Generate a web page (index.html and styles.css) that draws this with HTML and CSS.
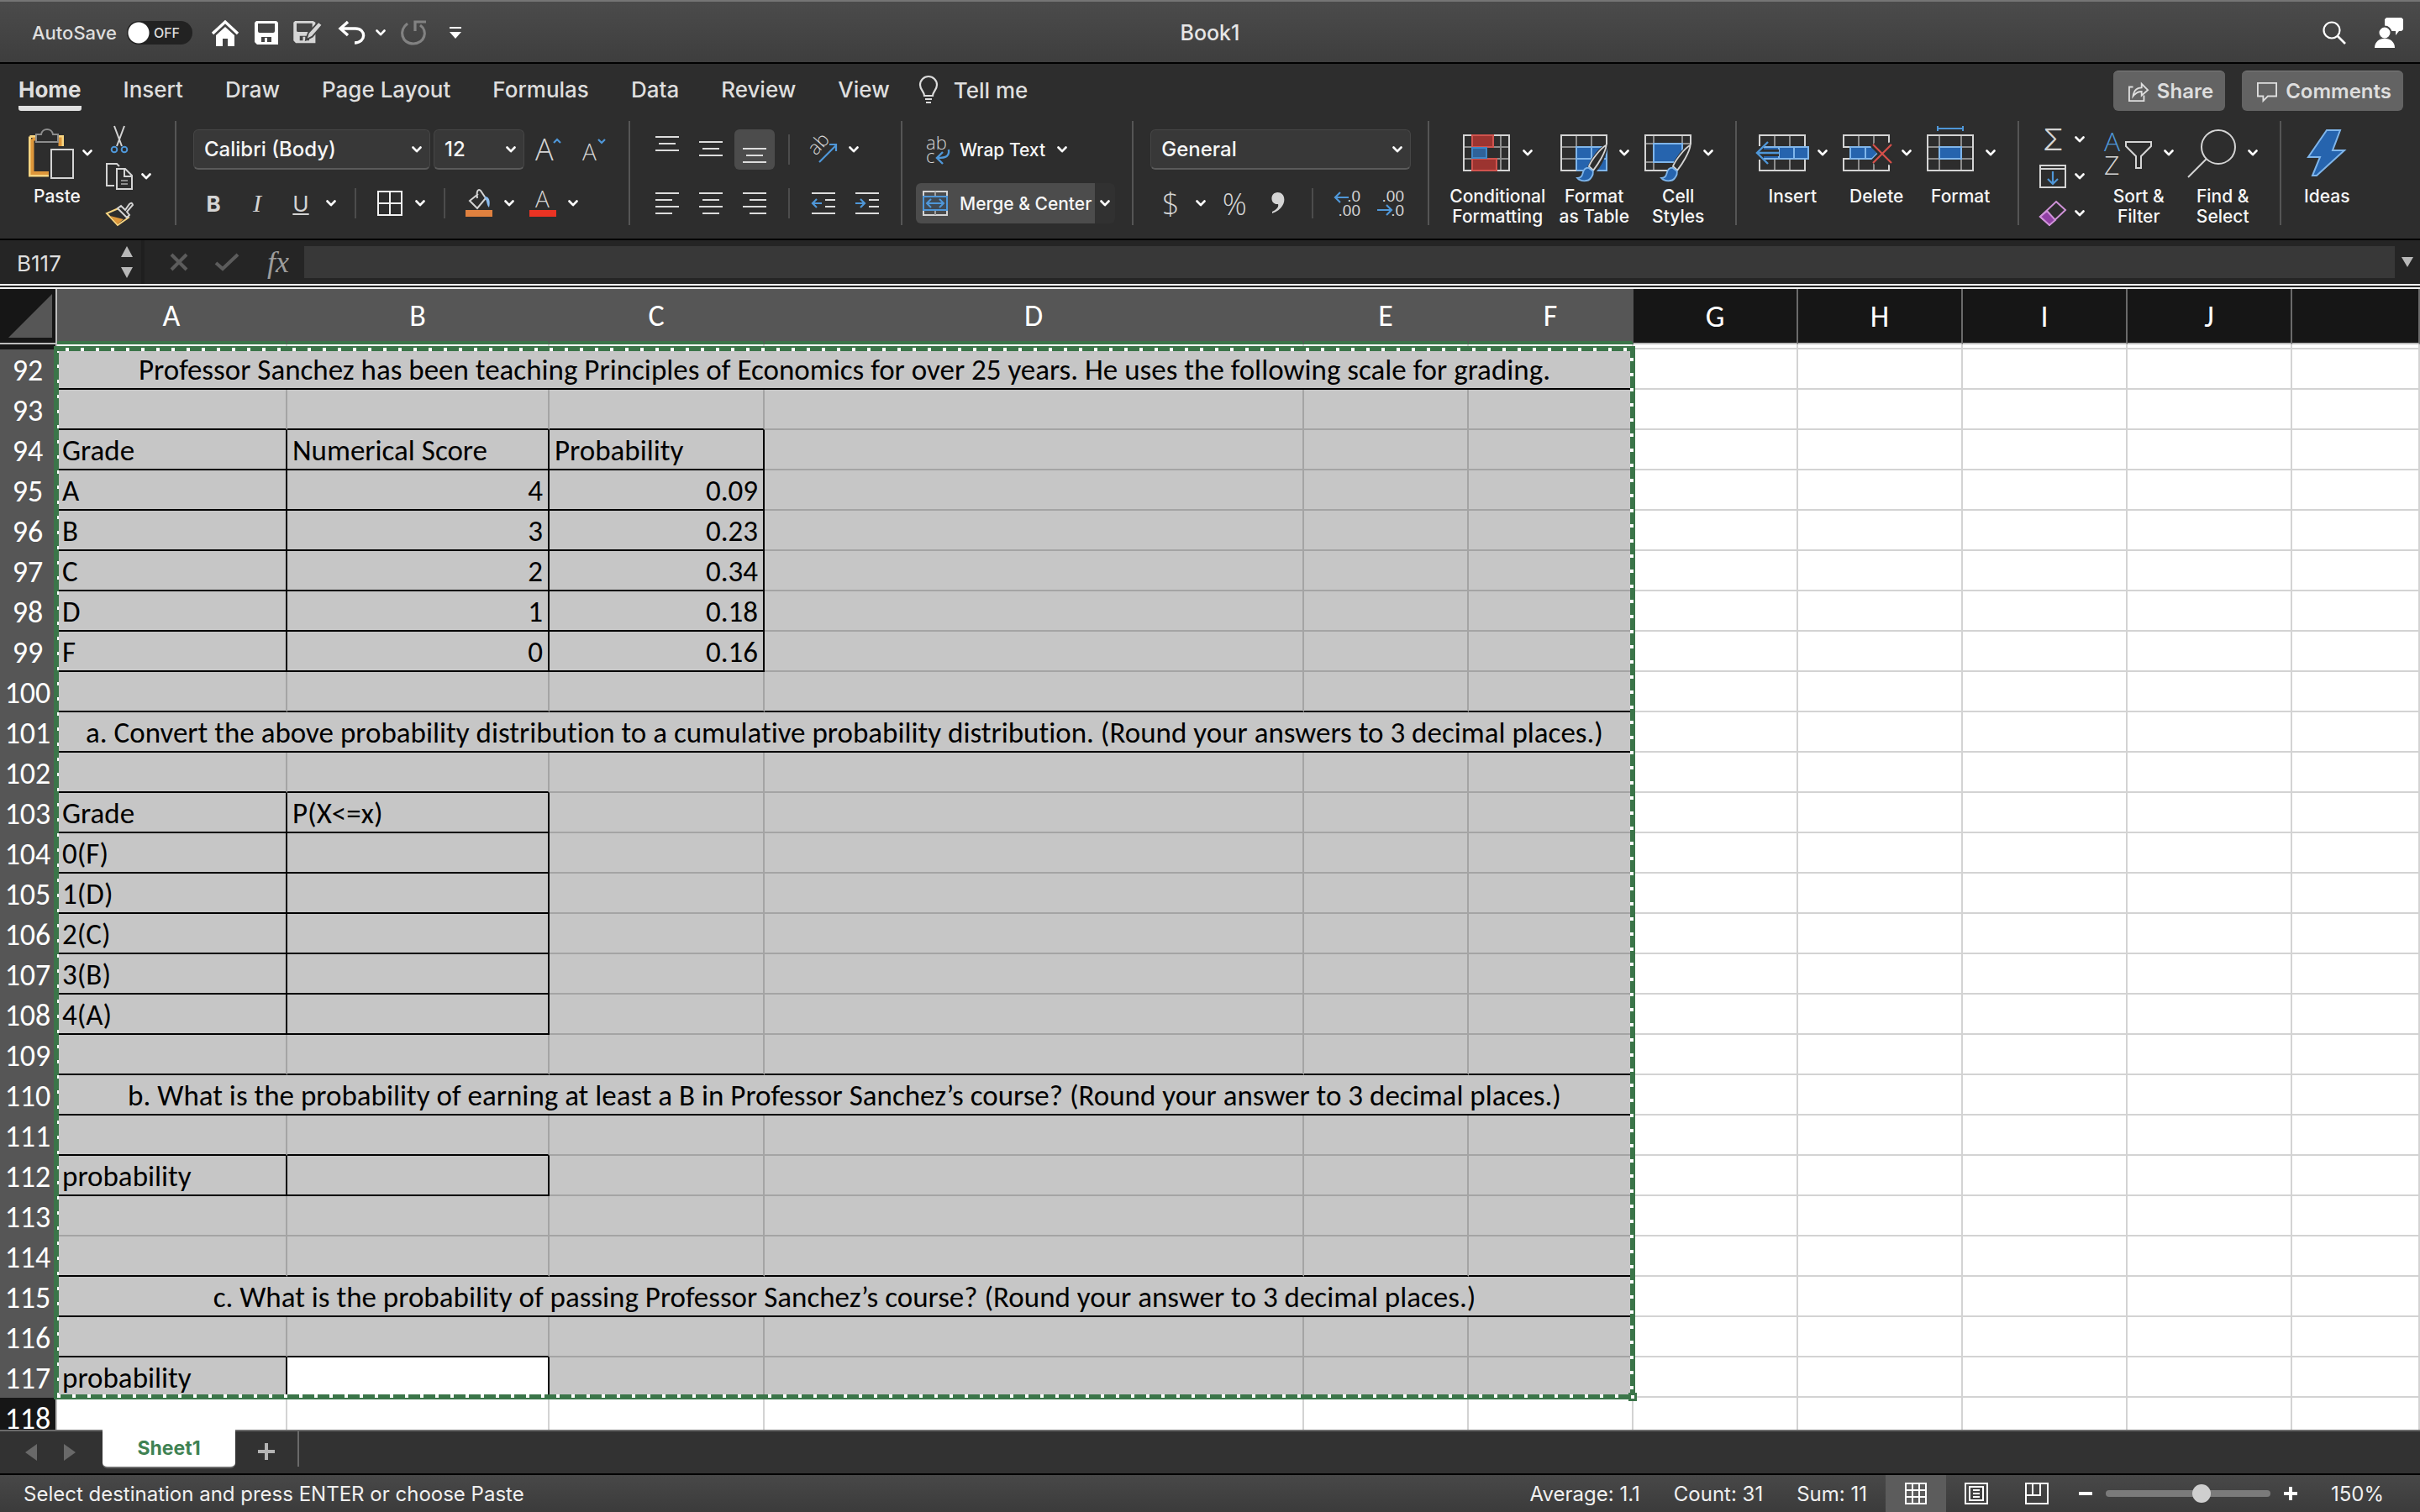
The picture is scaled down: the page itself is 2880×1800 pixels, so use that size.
FILE: index.html
```html
<!DOCTYPE html>
<html lang="en">

<head>
    <meta charset="UTF-8">
    <meta name="viewport" content="width=device-width, initial-scale=1.0">
    <title>Book1</title>
    <link rel="stylesheet" href="styles.css">
</head>

<body>
    <!-- Shared icons -->
    <svg class="defs" aria-hidden="true">
        <symbol id="chev" viewBox="0 0 12 8">
            <path d="M1.5 1.5 6 6.2l4.5-4.7" fill="none" stroke="#fff" stroke-width="2.6" stroke-linecap="round" stroke-linejoin="round" />
        </symbol>
        <symbol id="brush" viewBox="0 0 48 60">
            <path d="M46 3c-7 3-20 19-25 32l7 6C37 33 45 14 46 3z" fill="#2d2d2d" stroke="#2d2d2d" stroke-width="6" />
            <path d="M47 1C38 6 24 24 20 34l7 6C34 31 46 12 47 1z" fill="#2d2d2d" stroke="#d4d4d4" stroke-width="2.4" />
            <path d="M19 36c-6 0-8 5-9 10-1 4-4 6-8 6 5 6 17 6 21 0 3-4 4-8 3-11z" fill="#2664ae" stroke="#7fb5ea" stroke-width="2.4" />
        </symbol>
    </svg>

    <header class="titlebar">
        <div class="quick">
            <label class="autosave" for="autosave">AutoSave</label>
            <span class="switch"><input type="checkbox" id="autosave"><span>OFF</span></span>
            <button type="button" aria-label="Home">
                <svg width="34" height="32" viewBox="0 0 34 32"><path d="M2 17 17 3l15 14" fill="none" stroke="#fff" stroke-width="3.4" /><path d="M6 19 17 9l11 10v13h-8v-9h-6v9H6z" fill="#fff" /></svg>
            </button>
            <button type="button" aria-label="Save">
                <svg width="28" height="28" viewBox="0 0 28 28"><path fill="#fff" fill-rule="evenodd" d="M2 0h24l2 2v26H3l-3-3V2zM4 3v9q0 2 2 2h16q2 0 2-2V3zM8 19v6h4v-5h3v5h5v-6z" /></svg>
            </button>
            <button type="button" aria-label="Save as">
                <svg width="36" height="28" viewBox="0 0 38 30"><path fill="#d6d6d6" fill-rule="evenodd" d="M2 0h23l3 2v26H3l-3-3V2zM4 3v9q0 2 2 2h16q2 0 2-2V3zM8 19v6h4v-5h3v5h5v-6z" /><path d="m16 24 3-9L32 1l5 4-13 15z" fill="#d6d6d6" stroke="#444" stroke-width="2" /></svg>
            </button>
            <button type="button" class="q-undo" aria-label="Undo">
                <svg width="32" height="28" viewBox="0 0 32 28"><path d="M11 1 2 9l9 8M3 9h17c13 0 13 17-1 17" fill="none" stroke="#fff" stroke-width="3.4" /></svg>
                <svg class="chev"><use href="#chev" /></svg>
            </button>
            <button type="button" aria-label="Repeat">
                <svg width="30" height="30" viewBox="0 0 30 30"><path d="M8 4C-3 12 1 28 15 28c13 0 18-15 8-22M17 13V2h13" fill="none" stroke="#828282" stroke-width="3.2" /></svg>
            </button>
            <button type="button" class="q-more" aria-label="Customize toolbar">
                <svg width="14" height="14" viewBox="0 0 14 14"><path d="M0 0h14v2H0zM0 6h14l-7 8z" fill="#fff" /></svg>
            </button>
        </div>
        <h1>Book1</h1>
        <div class="account">
            <button type="button" aria-label="Search">
                <svg width="28" height="28" viewBox="0 0 28 28"><circle cx="11" cy="11" r="9.5" fill="none" stroke="#fff" stroke-width="2.2" /><path d="m18 18 9 9" stroke="#fff" stroke-width="2.6" /></svg>
            </button>
            <button type="button" aria-label="Account">
                <svg width="34" height="36" viewBox="0 0 34 36"><path d="M14 0h18l2 2v12l-2 2h-3l-4 5v-5H14l-2-2V2z" fill="#fff" /><circle cx="12" cy="18" r="7.5" fill="#fff" stroke="#454545" stroke-width="2" /><path d="M0 36c0-15 24-15 24 0z" fill="#fff" /></svg>
            </button>
        </div>
    </header>

    <div class="tabs">
        <nav>
            <a href="#" class="current">Home</a>
            <a href="#">Insert</a>
            <a href="#">Draw</a>
            <a href="#">Page Layout</a>
            <a href="#">Formulas</a>
            <a href="#">Data</a>
            <a href="#">Review</a>
            <a href="#">View</a>
        </nav>
        <button type="button" class="tellme">
            <svg width="24" height="36" viewBox="0 0 24 36"><path d="M7 25c0-5-5-7-5-13a10 10 0 0 1 20 0c0 6-5 8-5 13zM8 29h8M9 33h6" fill="none" stroke="#dcdcdc" stroke-width="2.2" /></svg>
            Tell me
        </button>
        <div class="sharing">
            <button type="button">
                <svg width="24" height="26" viewBox="0 0 26 26"><path d="M6 7H1v18h19v-7" fill="none" stroke="#dedede" stroke-width="2" /><path d="M6 19c1-8 5-11 11-11V3l8 8-8 7v-5c-5 0-8 2-11 6z" fill="none" stroke="#dedede" stroke-width="2" /></svg>
                Share
            </button>
            <button type="button">
                <svg width="24" height="26" viewBox="0 0 26 26"><path d="M1 2h24v17H14l-6 6v-6H1z" fill="none" stroke="#dedede" stroke-width="2" /></svg>
                Comments
            </button>
        </div>
    </div>

    <div class="ribbon">
        <section class="group clipboard">
            <button type="button" class="big">
                <span class="pic">
                    <svg width="60" height="64" viewBox="0 0 60 64">
                        <path d="M9.5 12.5H48.500V26M32 59H9.500V12.5" fill="none" stroke="#f7d581" stroke-width="3" />
                        <path d="M12.500 15.500H45.500V26M32 56H12.500V15.500" fill="none" stroke="#dd963a" stroke-width="4" />
                        <path d="M17 10h6c1-8 13-8 14 0h6v9H17z" fill="#2d2d2d" stroke="#8d8d8d" stroke-width="2" />
                        <path d="M32 24h30v40H32z" fill="#2d2d2d" />
                        <path d="M35 28h26v34H35z" fill="#2d2d2d" stroke="#d4d4d4" stroke-width="2" />
                    </svg>
                    <svg class="chev"><use href="#chev" /></svg>
                </span>
                Paste
            </button>
            <div class="stack">
                <div>
                    <button type="button" class="tool" aria-label="Cut">
                        <svg width="32" height="32" viewBox="0 0 32 32"><path d="m10 0 9 24M22 0l-9 24" stroke="#d4d4d4" stroke-width="2" /><circle cx="10" cy="28" r="3.3" fill="none" stroke="#4f97d8" stroke-width="2" /><circle cx="22" cy="28" r="3.3" fill="none" stroke="#4f97d8" stroke-width="2" /></svg>
                    </button>
                </div>
                <div>
                    <button type="button" class="tool" aria-label="Copy">
                        <svg width="32" height="32" viewBox="0 0 32 32"><path d="M16 4 13 1H1v26h9" fill="none" stroke="#d4d4d4" stroke-width="2" /><path d="M13 7h10l8 8v16H13zM22 7v9h9" fill="none" stroke="#d4d4d4" stroke-width="2" /><path d="M18 21h8M18 25h8" stroke="#8d8d8d" stroke-width="2" /></svg>
                    </button>
                    <button type="button" class="more" aria-label="Copy options"><svg class="chev"><use href="#chev" /></svg></button>
                </div>
                <div>
                    <button type="button" class="tool" aria-label="Format painter">
                        <svg width="32" height="32" viewBox="0 0 32 32"><path d="M15 10 1 16l13 14 13-9z" fill="#2d2d2d" stroke="#f7d581" stroke-width="2" /><path d="m5 19 16 4-7 6z" fill="#dd963a" /><path d="m14 10 4-3 5 5 5-7q3-3 4 1l-7 8 3 4-3 3z" fill="#2d2d2d" stroke="#d4d4d4" stroke-width="2" /></svg>
                    </button>
                </div>
            </div>
        </section>

        <section class="group font">
            <div class="row">
                <span class="pick family"><select aria-label="Font"><option>Calibri (Body)</option></select><svg class="chev"><use href="#chev" /></svg></span>
                <span class="pick size"><select aria-label="Font size"><option>12</option></select><svg class="chev"><use href="#chev" /></svg></span>
                <button type="button" class="tool" aria-label="Increase font size">
                    <svg width="32" height="32" viewBox="0 0 32 32"><text x="1" y="29" font-size="36" class="thin">A</text><path d="m23 8 4-4 4 4" fill="none" stroke="#4f97d8" stroke-width="2.2" /></svg>
                </button>
                <button type="button" class="tool" aria-label="Decrease font size">
                    <svg width="32" height="32" viewBox="0 0 32 32"><text x="5" y="29" font-size="28" class="thin">A</text><path d="m24 4 4 4 4-4" fill="none" stroke="#4f97d8" stroke-width="2.2" /></svg>
                </button>
            </div>
            <div class="row">
                <button type="button" class="tool letter bold">B</button>
                <button type="button" class="tool letter italic">I</button>
                <span class="split">
                    <button type="button" class="tool letter"><u>U</u></button>
                    <button type="button" class="more" aria-label="Underline options"><svg class="chev"><use href="#chev" /></svg></button>
                </span>
                <i class="sep"></i>
                <span class="split">
                    <button type="button" class="tool" aria-label="Borders">
                        <svg width="32" height="32" viewBox="0 0 32 32"><path d="M2 2h28v28H2zM16 2v28M2 16h28" fill="none" stroke="#f2f2f2" stroke-width="2" /></svg>
                    </button>
                    <button type="button" class="more" aria-label="Border options"><svg class="chev"><use href="#chev" /></svg></button>
                </span>
                <i class="sep"></i>
                <span class="split">
                    <button type="button" class="tool" aria-label="Fill color">
                        <svg width="32" height="32" viewBox="0 0 32 32"><path d="M15 5 5 13l9 9 10-12-6-9c-4-3-5 2-4 9" fill="none" stroke="#d4d4d4" stroke-width="2" /><path d="M22 8c6-1 8 5 6 13-3-3-2-8-6-13z" fill="#8bbdf0" /><path d="M0 24h32v8H0z" fill="#e0813f" /></svg>
                    </button>
                    <button type="button" class="more" aria-label="Fill color options"><svg class="chev"><use href="#chev" /></svg></button>
                </span>
                <span class="split">
                    <button type="button" class="tool" aria-label="Font color">
                        <svg width="32" height="32" viewBox="0 0 32 32"><text x="7" y="21" font-size="28" class="thin">A</text><path d="M0 24h32v8H0z" fill="#ea3323" /></svg>
                    </button>
                    <button type="button" class="more" aria-label="Font color options"><svg class="chev"><use href="#chev" /></svg></button>
                </span>
            </div>
        </section>

        <section class="group align">
            <div class="row">
                <button type="button" class="tool" aria-label="Top align"><svg width="28" height="32" viewBox="0 0 28 32"><path d="M0 1h28M4 9h20M0 17h28" class="bar" /></svg></button>
                <button type="button" class="tool" aria-label="Middle align"><svg width="28" height="32" viewBox="0 0 28 32"><path d="M0 7h28M4 15h20M0 23h28" class="bar" /></svg></button>
                <button type="button" class="tool on" aria-label="Bottom align"><svg width="28" height="32" viewBox="0 0 28 32"><path d="M0 15h28M4 23h20M0 31h28" class="bar" /></svg></button>
                <i class="sep"></i>
                <span class="split">
                    <button type="button" class="tool" aria-label="Orientation">
                        <svg width="32" height="32" viewBox="0 0 32 32"><text x="0" y="0" font-size="23" class="thin" transform="translate(7 24) rotate(-48)">ab</text><path d="m11 31 20-20M23 10h8v8" fill="none" stroke="#4f97d8" stroke-width="2.2" /></svg>
                    </button>
                    <button type="button" class="more" aria-label="Orientation options"><svg class="chev"><use href="#chev" /></svg></button>
                </span>
            </div>
            <div class="row">
                <button type="button" class="tool" aria-label="Align left"><svg width="28" height="26" viewBox="0 0 28 26"><path d="M0 1h28M0 9h20M0 17h28M0 25h20" class="bar" /></svg></button>
                <button type="button" class="tool" aria-label="Center"><svg width="28" height="26" viewBox="0 0 28 26"><path d="M0 1h28M4 9h20M0 17h28M4 25h20" class="bar" /></svg></button>
                <button type="button" class="tool" aria-label="Align right"><svg width="28" height="26" viewBox="0 0 28 26"><path d="M0 1h28M8 9h20M0 17h28M8 25h20" class="bar" /></svg></button>
                <i class="sep"></i>
                <button type="button" class="tool" aria-label="Decrease indent"><svg width="28" height="26" viewBox="0 0 28 26"><path d="M0 1h28M16 9h12M16 17h12M0 25h28" class="bar" /><path d="M12 13H2M6 8l-5 5 5 5" fill="none" stroke="#4f97d8" stroke-width="2.2" /></svg></button>
                <button type="button" class="tool" aria-label="Increase indent"><svg width="28" height="26" viewBox="0 0 28 26"><path d="M0 1h28M16 9h12M16 17h12M0 25h28" class="bar" /><path d="M0 13h10M6 8l5 5-5 5" fill="none" stroke="#4f97d8" stroke-width="2.2" /></svg></button>
            </div>
        </section>

        <section class="group wrap">
            <div class="row">
                <button type="button" class="wide">
                    <svg width="30" height="36" viewBox="0 0 30 36"><text x="4" y="18" font-size="22" class="thin">ab</text><text x="4" y="34" font-size="22" class="thin">c</text><path d="M31 18c1 8-3 10-13 10M24 21l-7 7 7 7" fill="none" stroke="#4f97d8" stroke-width="2.4" /></svg>
                    Wrap Text
                    <svg class="chev"><use href="#chev" /></svg>
                </button>
            </div>
            <div class="row">
                <span class="split merge">
                    <button type="button" class="wide on">
                        <svg width="30" height="30" viewBox="0 0 30 30"><path d="M1 1h28v28H1z" fill="none" stroke="#d4d4d4" stroke-width="2" /><path d="M15 1v6M15 23v6" stroke="#a0a0a0" stroke-width="2" /><path d="M1 7h28v16H1z" fill="#3f4a55" stroke="#4f97d8" stroke-width="2" /><path d="M5 15h20M10 10l-5 5 5 5M20 10l5 5-5 5" fill="none" stroke="#4f97d8" stroke-width="2" /></svg>
                        Merge &amp; Center
                    </button>
                    <button type="button" class="more" aria-label="Merge options"><svg class="chev"><use href="#chev" /></svg></button>
                </span>
            </div>
        </section>

        <section class="group number">
            <div class="row">
                <span class="pick format"><select aria-label="Number format"><option>General</option></select><svg class="chev"><use href="#chev" /></svg></span>
            </div>
            <div class="row">
                <span class="split">
                    <button type="button" class="tool sign">$</button>
                    <button type="button" class="more" aria-label="Currency options"><svg class="chev"><use href="#chev" /></svg></button>
                </span>
                <button type="button" class="tool sign">%</button>
                <button type="button" class="tool" aria-label="Comma style"><svg width="16" height="26" viewBox="0 0 16 26"><path d="M7.500 0C18 0 20 18 1 25v-2c6-3 8-6 7-9C-2 15-2 0 7.500 0z" fill="#d4d4d4" /></svg></button>
                <i class="sep"></i>
                <button type="button" class="tool" aria-label="Increase decimal"><svg width="32" height="32" viewBox="0 0 32 32"><text x="32" y="14" class="thin digits">.0</text><text x="32" y="31" class="thin digits">.00</text><path d="M18 9H2M8 3 2 9l6 6" fill="none" stroke="#4f97d8" stroke-width="2.2" /></svg></button>
                <button type="button" class="tool" aria-label="Decrease decimal"><svg width="32" height="32" viewBox="0 0 32 32"><text x="32" y="14" class="thin digits">.00</text><text x="32" y="31" class="thin digits">.0</text><path d="M0 24h16M11 18l6 6-6 6" fill="none" stroke="#4f97d8" stroke-width="2.2" /></svg></button>
            </div>
        </section>

        <section class="group cells">
            <button type="button" class="big two">
                <span class="pic">
                    <svg width="60" height="64" viewBox="0 0 60 64"><path d="M12 11v42M35 11v42M46 11v42M2 25h54M2 39h54" stroke="#8d8d8d" stroke-width="2" /><path d="M2 11h54v42H2z" fill="none" stroke="#d4d4d4" stroke-width="2" /><path d="M12 11h25v14H12zM12 39h29v14H12z" fill="#9c3430" stroke="#d0534e" stroke-width="2" /><path d="M12 26h17v12H12z" fill="#2f6299" stroke="#3f86c6" stroke-width="2" /><path d="M30 26h15v12H30z" fill="#2d2d2d" /></svg>
                    <svg class="chev"><use href="#chev" /></svg>
                </span>
                Conditional<br>Formatting
            </button>
            <button type="button" class="big">
                <span class="pic">
                    <svg width="60" height="64" viewBox="0 0 60 64"><path d="M21 25h36v28H21z" fill="#2664ae" /><path d="M21 11v14M39 11v14M3 25h18M3 39h18" stroke="#8d8d8d" stroke-width="2" /><path d="M21 53V25h36M39 25v28M21 39h36" fill="none" stroke="#7fb5ea" stroke-width="2" /><path d="M21 53H3V11h54v14" fill="none" stroke="#d4d4d4" stroke-width="2" /><path d="M57 25v28H21" fill="none" stroke="#7fb5ea" stroke-width="2" /><use href="#brush" x="16" y="22" width="46" height="46" /></svg>
                    <svg class="chev"><use href="#chev" /></svg>
                </span>
                Format<br>as Table
            </button>
            <button type="button" class="big">
                <span class="pic">
                    <svg width="60" height="64" viewBox="0 0 60 64"><path d="M13 11v42M47 11v42M3 21h54M3 43h54" stroke="#8d8d8d" stroke-width="2" /><path d="M3 11h54v42H3z" fill="none" stroke="#d4d4d4" stroke-width="2" /><path d="M13 21h34v22H13z" fill="#2664ae" stroke="#7fb5ea" stroke-width="2" /><path d="M40 44h20v12H40zM50 24h10v22H50z" fill="#2d2d2d" /><use href="#brush" x="16" y="22" width="46" height="46" /></svg>
                    <svg class="chev"><use href="#chev" /></svg>
                </span>
                Cell<br>Styles
            </button>
        </section>

        <section class="group cells">
            <button type="button" class="big">
                <span class="pic">
                    <svg width="60" height="64" viewBox="0 0 60 64"><path d="M21 11v42M39 11v42" stroke="#8d8d8d" stroke-width="2" /><path d="M3 11h54v42H3z" fill="none" stroke="#d4d4d4" stroke-width="2" /><path d="M4 25h57v14H4z" fill="#2664ae" stroke="#7fb5ea" stroke-width="2" /><path d="M26 25v14M44 25v14" stroke="#7fb5ea" stroke-width="2" /><path d="M1 24h7v16H1zM6 28h20v8H6z" fill="#2d2d2d" /><path d="M26 32H0M13 19 0 32l13 13" fill="none" stroke="#4f97d8" stroke-width="2.4" /></svg>
                    <svg class="chev"><use href="#chev" /></svg>
                </span>
                Insert
            </button>
            <button type="button" class="big">
                <span class="pic">
                    <svg width="60" height="64" viewBox="0 0 60 64"><path d="M21 11v42M39 11v42" stroke="#8d8d8d" stroke-width="2" /><path d="M3 11h54v42H3z" fill="none" stroke="#d4d4d4" stroke-width="2" /><path d="M0 26h60v12H0z" fill="#2d2d2d" /><path d="M4 25h8M4 39h8" stroke="#d4d4d4" stroke-width="2" /><path d="M11 25h26l7 7-7 7H11z" fill="#2664ae" stroke="#7fb5ea" stroke-width="2" /><path d="M29 25v14" stroke="#7fb5ea" stroke-width="2" /><path d="m38 22 22 22M60 22 38 44" stroke="#2d2d2d" stroke-width="8" /><path d="m38 22 22 22M60 22 38 44" stroke="#d8504a" stroke-width="2.2" /></svg>
                    <svg class="chev"><use href="#chev" /></svg>
                </span>
                Delete
            </button>
            <button type="button" class="big">
                <span class="pic">
                    <svg width="60" height="64" viewBox="0 0 60 64"><path d="M17 11v42M43 11v42M3 25h54M3 39h54" stroke="#8d8d8d" stroke-width="2" /><path d="M3 11h54v42H3z" fill="none" stroke="#d4d4d4" stroke-width="2" /><path d="M17 25h26v14H17z" fill="#2664ae" stroke="#7fb5ea" stroke-width="2" /><path d="M15 3h30M15 0v6M45 0v6" stroke="#4f97d8" stroke-width="2" /></svg>
                    <svg class="chev"><use href="#chev" /></svg>
                </span>
                Format
            </button>
        </section>

        <section class="group editing">
            <div class="stack">
                <div>
                    <button type="button" class="tool sum">Σ</button>
                    <button type="button" class="more" aria-label="AutoSum options"><svg class="chev"><use href="#chev" /></svg></button>
                </div>
                <div>
                    <button type="button" class="tool" aria-label="Fill"><svg width="32" height="28" viewBox="0 0 32 28"><path d="M1 1h30v26H1zM1 5h30" fill="none" stroke="#d4d4d4" stroke-width="2" /><path d="M16 8v15M10 17l6 6 6-6" fill="none" stroke="#4f97d8" stroke-width="2.2" /></svg></button>
                    <button type="button" class="more" aria-label="Fill options"><svg class="chev"><use href="#chev" /></svg></button>
                </div>
                <div>
                    <button type="button" class="tool" aria-label="Clear"><svg width="32" height="32" viewBox="0 0 32 32"><path d="M20 2 31 12 12 30 1 20z" fill="none" stroke="#cf92d8" stroke-width="2" /><path d="m9 13 10 11-7 6L1 20z" fill="#9140a5" stroke="#cf92d8" stroke-width="2" /></svg></button>
                    <button type="button" class="more" aria-label="Clear options"><svg class="chev"><use href="#chev" /></svg></button>
                </div>
            </div>
            <button type="button" class="big">
                <span class="pic">
                    <svg width="60" height="64" viewBox="0 0 60 64"><text x="1" y="30" font-size="32" class="thin blue">A</text><text x="1" y="58" font-size="32" class="thin">Z</text><path d="M27 19h30v5L45 36v14h-6V36L27 24z" fill="none" stroke="#d4d4d4" stroke-width="2" /></svg>
                    <svg class="chev"><use href="#chev" /></svg>
                </span>
                Sort &amp;<br>Filter
            </button>
            <button type="button" class="big">
                <span class="pic">
                    <svg width="60" height="64" viewBox="0 0 60 64"><circle cx="37" cy="25" r="20" fill="none" stroke="#d4d4d4" stroke-width="2" /><path d="M23 39 1 61" stroke="#d4d4d4" stroke-width="2" /></svg>
                    <svg class="chev"><use href="#chev" /></svg>
                </span>
                Find &amp;<br>Select
            </button>
        </section>

        <section class="group ideas">
            <button type="button" class="big">
                <span class="pic">
                    <svg width="60" height="64" viewBox="0 0 60 64"><path d="M30 5h16L37 29h14L18 59h-5l9-22H8z" fill="#2664ae" stroke="#7fb5ea" stroke-width="2" /></svg>
                </span>
                Ideas
            </button>
        </section>
    </div>

    <div class="formula">
        <div class="namebox">
            <input type="text" value="B117" aria-label="Name box">
            <svg width="14" height="38" viewBox="0 0 14 38"><path d="M7 0l7 13H0zM7 38l7-13H0z" fill="#b8b8b8" /></svg>
        </div>
        <div class="entry">
            <button type="button" aria-label="Cancel"><svg width="22" height="20" viewBox="0 0 22 20"><path d="m2 1 18 18M20 1 2 19" stroke="#5c5c5c" stroke-width="4" /></svg></button>
            <button type="button" aria-label="Enter"><svg width="28" height="20" viewBox="0 0 28 20"><path d="m1 11 8 7L27 1" fill="none" stroke="#5c5c5c" stroke-width="4" /></svg></button>
            <button type="button" class="fx">fx</button>
        </div>
        <input type="text" class="bar-input" aria-label="Formula">
        <button type="button" class="expand" aria-label="Expand formula bar"><svg width="14" height="12" viewBox="0 0 14 12"><path d="M0 0h14L7 12z" fill="#b8b8b8" /></svg></button>
    </div>

    <main class="sheet">
        <table>
            <colgroup>
                <col class="c-head"><col class="c-a"><col class="c-b"><col class="c-c"><col class="c-d"><col class="c-std"><col class="c-std"><col class="c-std"><col class="c-std"><col class="c-std"><col class="c-std"><col>
            </colgroup>
            <thead>
                <tr>
                    <td class="corner"><svg width="52" height="52" viewBox="0 0 52 52"><path d="M52 0v52H0z" fill="#565656" /></svg></td>
                    <th class="sel">A</th><th class="sel">B</th><th class="sel">C</th><th class="sel">D</th><th class="sel">E</th><th class="sel">F</th><th>G</th><th>H</th><th>I</th><th>J</th><th></th>
                </tr>
            </thead>
            <tbody>
                <tr class="sliver"><th></th><td></td><td></td><td></td><td></td><td></td><td></td><td></td><td></td><td></td><td></td><td></td></tr>
            </tbody>
            <tbody class="selection">
                <tr class="merged"><th>92</th><td colspan="6">Professor Sanchez has been teaching Principles of Economics for over 25 years. He uses the following scale for grading.</td><td></td><td></td><td></td><td></td><td></td></tr>
                <tr><th>93</th><td class="under"></td><td class="under"></td><td class="under"></td><td></td><td></td><td></td><td></td><td></td><td></td><td></td><td></td></tr>
                <tr><th>94</th><td class="box">Grade</td><td class="box">Numerical Score</td><td class="box">Probability</td><td></td><td></td><td></td><td></td><td></td><td></td><td></td><td></td></tr>
                <tr><th>95</th><td class="box">A</td><td class="box num">4</td><td class="box num">0.09</td><td></td><td></td><td></td><td></td><td></td><td></td><td></td><td></td></tr>
                <tr><th>96</th><td class="box">B</td><td class="box num">3</td><td class="box num">0.23</td><td></td><td></td><td></td><td></td><td></td><td></td><td></td><td></td></tr>
                <tr><th>97</th><td class="box">C</td><td class="box num">2</td><td class="box num">0.34</td><td></td><td></td><td></td><td></td><td></td><td></td><td></td><td></td></tr>
                <tr><th>98</th><td class="box">D</td><td class="box num">1</td><td class="box num">0.18</td><td></td><td></td><td></td><td></td><td></td><td></td><td></td><td></td></tr>
                <tr><th>99</th><td class="box">F</td><td class="box num">0</td><td class="box num">0.16</td><td></td><td></td><td></td><td></td><td></td><td></td><td></td><td></td></tr>
                <tr class="above"><th>100</th><td></td><td></td><td></td><td></td><td></td><td></td><td></td><td></td><td></td><td></td><td></td></tr>
                <tr class="merged"><th>101</th><td colspan="6">a. Convert the above probability distribution to a cumulative probability distribution. (Round your answers to 3 decimal places.)</td><td></td><td></td><td></td><td></td><td></td></tr>
                <tr><th>102</th><td class="under"></td><td class="under"></td><td></td><td></td><td></td><td></td><td></td><td></td><td></td><td></td><td></td></tr>
                <tr><th>103</th><td class="box">Grade</td><td class="box">P(X&lt;=x)</td><td></td><td></td><td></td><td></td><td></td><td></td><td></td><td></td><td></td></tr>
                <tr><th>104</th><td class="box">0(F)</td><td class="box"></td><td></td><td></td><td></td><td></td><td></td><td></td><td></td><td></td><td></td></tr>
                <tr><th>105</th><td class="box">1(D)</td><td class="box"></td><td></td><td></td><td></td><td></td><td></td><td></td><td></td><td></td><td></td></tr>
                <tr><th>106</th><td class="box">2(C)</td><td class="box"></td><td></td><td></td><td></td><td></td><td></td><td></td><td></td><td></td><td></td></tr>
                <tr><th>107</th><td class="box">3(B)</td><td class="box"></td><td></td><td></td><td></td><td></td><td></td><td></td><td></td><td></td><td></td></tr>
                <tr><th>108</th><td class="box">4(A)</td><td class="box"></td><td></td><td></td><td></td><td></td><td></td><td></td><td></td><td></td><td></td></tr>
                <tr class="above"><th>109</th><td></td><td></td><td></td><td></td><td></td><td></td><td></td><td></td><td></td><td></td><td></td></tr>
                <tr class="merged"><th>110</th><td colspan="6">b. What is the probability of earning at least a B in Professor Sanchez’s course? (Round your answer to 3 decimal places.)</td><td></td><td></td><td></td><td></td><td></td></tr>
                <tr><th>111</th><td class="under"></td><td class="under"></td><td></td><td></td><td></td><td></td><td></td><td></td><td></td><td></td><td></td></tr>
                <tr><th>112</th><td class="box">probability</td><td class="box"></td><td></td><td></td><td></td><td></td><td></td><td></td><td></td><td></td><td></td></tr>
                <tr><th>113</th><td></td><td></td><td></td><td></td><td></td><td></td><td></td><td></td><td></td><td></td><td></td></tr>
                <tr class="above"><th>114</th><td></td><td></td><td></td><td></td><td></td><td></td><td></td><td></td><td></td><td></td><td></td></tr>
                <tr class="merged"><th>115</th><td colspan="6">c. What is the probability of passing Professor Sanchez’s course? (Round your answer to 3 decimal places.)</td><td></td><td></td><td></td><td></td><td></td></tr>
                <tr><th>116</th><td class="under"></td><td class="under"></td><td></td><td></td><td></td><td></td><td></td><td></td><td></td><td></td><td></td></tr>
                <tr><th>117</th><td class="box">probability</td><td class="box active"></td><td></td><td></td><td></td><td></td><td></td><td></td><td></td><td></td><td></td></tr>
            </tbody>
            <tbody>
                <tr><th>118</th><td></td><td></td><td></td><td></td><td></td><td></td><td></td><td></td><td></td><td></td><td></td></tr>
            </tbody>
        </table>
        <!-- copy outline around A92:F117 -->
        <div class="ants"><span class="handle"></span></div>
    </main>

    <div class="sheets">
        <button type="button" aria-label="Previous sheet"><svg width="14" height="20" viewBox="0 0 14 20"><path d="M14 0v20L0 10z" fill="#696969" /></svg></button>
        <button type="button" aria-label="Next sheet"><svg width="14" height="20" viewBox="0 0 14 20"><path d="M0 0v20l14-10z" fill="#696969" /></svg></button>
        <button type="button" class="sheet-tab">Sheet1</button>
        <button type="button" class="add" aria-label="Add sheet"><svg width="20" height="20" viewBox="0 0 20 20"><path d="M10 0v20M0 10h20" stroke="#b4b4b4" stroke-width="4" /></svg></button>
    </div>

    <footer class="status">
        <span class="hint">Select destination and press ENTER or choose Paste</span>
        <span>Average: 1.1</span>
        <span>Count: 31</span>
        <span>Sum: 11</span>
        <div class="views">
            <button type="button" class="on" aria-label="Normal view"><svg width="26" height="26" viewBox="0 0 26 26"><path d="M1 1h24v24H1zM9 1v24M17 1v24M1 9h24M1 17h24" fill="none" stroke="#fff" stroke-width="2" /></svg></button>
            <button type="button" aria-label="Page layout view"><svg width="28" height="26" viewBox="0 0 28 26"><path d="M1 1h26v24H1zM6 5h16v16H6zM10 9h8M10 13h8M10 17h8" fill="none" stroke="#fff" stroke-width="2" /></svg></button>
            <button type="button" aria-label="Page break view"><svg width="28" height="26" viewBox="0 0 28 26"><path d="M1 1h26v24H1zM9 1v14M1 15h17V1" fill="none" stroke="#fff" stroke-width="2" /></svg></button>
        </div>
        <div class="zoom">
            <button type="button" aria-label="Zoom out"><svg width="16" height="16" viewBox="0 0 16 16"><path d="M0 8h16" stroke="#fff" stroke-width="4" /></svg></button>
            <input type="range" min="0" max="100" value="59" aria-label="Zoom">
            <button type="button" aria-label="Zoom in"><svg width="16" height="16" viewBox="0 0 16 16"><path d="M0 8h16M8 0v16" stroke="#fff" stroke-width="4" /></svg></button>
        </div>
        <span class="percent">150%</span>
    </footer>
</body>

</html>
```
FILE: styles.css
```css
* {
    box-sizing: border-box;
}

body {
    margin: 0;
    height: 100vh;
    display: flex;
    flex-direction: column;
    overflow: hidden;
    background: #2d2d2d;
    color: #dedede;
    font-family: Inter, "Liberation Sans", sans-serif;
    font-size: 24px;
}

button {
    display: flex;
    align-items: center;
    justify-content: center;
    padding: 0;
    border: none;
    background: none;
    color: inherit;
    font: inherit;
    cursor: pointer;
}

svg {
    display: block;
    flex: none;
    overflow: visible;
}

.defs {
    position: absolute;
    width: 0;
    height: 0;
}

.chev {
    width: 12px;
    height: 8px;
}

.thin {
    fill: #d4d4d4;
    font-family: "Open Sans", sans-serif;
    font-weight: 300;
}

.blue {
    fill: #4f97d8;
}

.digits {
    font-family: "Liberation Sans Narrow", "Liberation Sans", sans-serif;
    font-size: 19px;
    text-anchor: end;
}

.bar {
    fill: none;
    stroke: #dcdcdc;
    stroke-width: 2;
}

/* Title bar */
.titlebar {
    flex: none;
    height: 76px;
    display: grid;
    grid-template-columns: 1fr auto 1fr;
    align-items: center;
    padding-top: 2px;
    border-top: 2px solid #757575;
    border-bottom: 2px solid #000;
    background: linear-gradient(#4b4b4b, #3e3e3e);
}

.titlebar h1 {
    margin: 0;
    color: #e6e6e6;
    font-size: 25px;
    font-weight: 500;
}

.quick {
    display: flex;
    align-items: center;
    gap: 18px;
    padding-left: 38px;
}

.autosave {
    margin-right: -6px;
    font-size: 22px;
    font-weight: 500;
}

.switch {
    display: grid;
    align-items: center;
    margin-right: 4px;
}

.switch > * {
    grid-area: 1 / 1;
}

.switch input {
    appearance: none;
    width: 78px;
    height: 28px;
    margin: 0;
    border-radius: 14px;
    background: radial-gradient(circle at 14px 14px, #fff 12px, transparent 13px), #222;
}

.switch span {
    padding-left: 32px;
    font-size: 16px;
    font-weight: 500;
    pointer-events: none;
}

.q-undo {
    gap: 12px;
}

.q-more {
    margin-left: 10px;
}

.account {
    display: flex;
    align-items: center;
    justify-content: flex-end;
    gap: 34px;
    padding-right: 20px;
}

/* Tabs */
.tabs {
    flex: none;
    height: 68px;
    display: flex;
    align-items: flex-start;
    padding: 8px 20px 0 22px;
    font-size: 26px;
    font-weight: 500;
}

.tabs nav {
    display: flex;
    gap: 50px;
}

.tabs a {
    height: 48px;
    line-height: 46px;
    color: inherit;
    text-decoration: none;
}

.tabs .current {
    border-bottom: 6px solid #e0e0e0;
    border-radius: 3px;
    font-weight: 700;
}

.tellme {
    height: 46px;
    gap: 18px;
    margin-left: 34px;
}

.sharing {
    display: flex;
    gap: 20px;
    margin-left: auto;
}

.sharing button {
    height: 48px;
    gap: 10px;
    padding: 0 14px 0 18px;
    border-top: 1px solid #7c7c7c;
    border-radius: 6px;
    background: #636363;
    font-size: 24px;
    font-weight: 600;
}

/* Ribbon */
.ribbon {
    flex: none;
    height: 142px;
    display: flex;
    align-items: flex-start;
    border-bottom: 2px solid #000;
    color: #f6f6f6;
    font-size: 21px;
    font-weight: 500;
}

.group {
    height: 124px;
    border-right: 2px solid #555;
}

.font,
.align,
.wrap,
.number {
    display: flex;
    flex-direction: column;
    gap: 16px;
    padding: 10px 20px 0;
}

.align {
    padding-right: 16px;
}

.wrap {
    padding-left: 16px;
}

.clipboard,
.cells,
.editing,
.ideas {
    display: flex;
    gap: 16px;
    padding: 0 26px 0 24px;
}

.clipboard {
    gap: 0;
    padding: 0 22px 0 26px;
}

.editing {
    padding-left: 20px;
}

.ideas {
    border-right: none;
}

.row,
.split {
    display: flex;
    align-items: center;
}

.row {
    gap: 4px;
    height: 48px;
}

.sep {
    width: 2px;
    height: 36px;
    margin: 0 12px;
    background: #4c4c4c;
}

.tool {
    width: 48px;
    height: 48px;
    border-radius: 6px;
}

.more {
    width: 24px;
    height: 48px;
}

.on {
    background: #4c4c4c;
}

.stack {
    width: 64px;
}

.clipboard .stack {
    margin-left: 12px;
}

.stack > div {
    display: flex;
    height: 44px;
}

.stack .tool {
    width: 40px;
    height: 44px;
}

.stack .more {
    height: 44px;
}

.letter {
    color: #d4d4d4;
    font-size: 26px;
    font-weight: 400;
}

.bold {
    font-weight: 700;
}

.italic {
    font-family: "Liberation Serif", serif;
    font-size: 30px;
    font-style: italic;
}

.sign {
    color: #d4d4d4;
    font-family: "Open Sans", sans-serif;
    font-size: 36px;
    font-weight: 300;
}

.sum {
    color: #d4d4d4;
    font-size: 36px;
    font-weight: 300;
}

.pick {
    display: grid;
    align-items: center;
}

.pick > * {
    grid-area: 1 / 1;
}

.pick select {
    appearance: none;
    width: 100%;
    height: 48px;
    padding: 0 12px;
    border: 1px solid #464646;
    border-bottom: 2px solid #5a5a5a;
    border-radius: 6px;
    background: #383838;
    color: #f6f6f6;
    font: inherit;
    font-size: 24px;
}

.pick .chev {
    justify-self: end;
    margin-right: 10px;
    pointer-events: none;
}

.family {
    width: 282px;
}

.size {
    width: 108px;
}

.format {
    width: 310px;
}

.wide {
    height: 48px;
    gap: 14px;
    padding: 0 4px 0 8px;
}

.merge .wide {
    border-radius: 6px 0 0 6px;
}

.merge .more {
    border-radius: 0 6px 6px 0;
    background: #313131;
}

.big {
    min-width: 84px;
    flex-direction: column;
    justify-content: flex-start;
    padding-top: 6px;
    line-height: 24px;
}

.two {
    min-width: 112px;
}

.ideas .big {
    min-width: 60px;
}

.pic {
    display: flex;
    align-items: center;
    gap: 12px;
    margin-bottom: 8px;
}

/* Formula bar */
.formula {
    flex: none;
    height: 58px;
    display: flex;
    align-items: center;
    border-bottom: 6px double #f4f4f4;
    background: #252525;
}

.namebox {
    width: 172px;
    height: 52px;
    display: flex;
    align-items: center;
    padding: 0 10px 0 20px;
    border-right: 4px solid #1f1f1f;
}

.namebox input {
    flex: 1;
    min-width: 0;
    padding: 2px 0 0;
    border: none;
    background: none;
    color: #dedede;
    font: inherit;
    font-size: 26px;
}

.entry {
    display: flex;
    align-items: center;
    gap: 32px;
    padding: 0 16px 0 30px;
}

.fx {
    width: 30px;
    color: #9c9c9c;
    font-family: "Liberation Serif", serif;
    font-size: 36px;
    font-style: italic;
    line-height: 40px;
}

.bar-input {
    flex: 1;
    height: 38px;
    border: none;
    background: #383838;
    color: #fff;
    font: inherit;
}

.expand {
    width: 30px;
}

/* Grid */
.sheet {
    flex: 1;
    min-height: 0;
    position: relative;
    overflow: hidden;
    background: #fff;
    color: #000;
    font-family: Calibri, Carlito, Lato, sans-serif;
    font-size: 35px;
    font-variant-ligatures: none;
}

table {
    width: 100%;
    table-layout: fixed;
    border-spacing: 0;
}

.c-head {
    width: 68px;
}

.c-a {
    width: 274px;
}

.c-b {
    width: 312px;
}

.c-c {
    width: 256px;
}

.c-d {
    width: 642px;
}

.c-std {
    width: 196px;
}

th,
td {
    height: 48px;
    padding: 2px 6px 0;
    border-right: 2px solid #d3d3d3;
    border-bottom: 2px solid #d3d3d3;
    line-height: 44px;
    text-align: left;
    white-space: nowrap;
}

th {
    padding: 2px 0 0;
    background: #161616;
    color: #fff;
    font-size: 36px;
    font-weight: 400;
    text-align: center;
}

thead th,
.corner {
    height: 66px;
    border-right-color: #6a6a6a;
    border-bottom-color: #bdbdbd;
}

thead .sel {
    border-right-color: #565656;
    border-bottom: 4px solid #3b7549;
    background: #565656;
}

.corner {
    padding: 0 4px 0 10px;
    border-right-color: #bdbdbd;
    background: #161616;
}

tbody th {
    border-right-color: #bdbdbd;
    border-bottom: none;
}

.sliver th,
.sliver td {
    height: 6px;
    padding: 0;
    line-height: 0;
}

.selection th {
    background: #565656;
}

.selection tr:not(.merged) td:nth-child(-n+7),
.merged td:nth-child(2) {
    border-color: #a4a4a4;
    background: #c6c6c6;
}

.merged td:nth-child(2) {
    border-bottom-color: #000;
    text-align: center;
}

.selection tr.above:not(.merged) td:nth-child(-n+7),
.selection tr:not(.merged) .under:nth-child(-n+7) {
    border-bottom-color: #000;
}

.selection tr:not(.merged) .box:nth-child(-n+7) {
    border-color: #000;
}

.selection tr:not(.merged) .active:nth-child(-n+7) {
    background: #fff;
}

.num {
    text-align: right;
}

.ants {
    position: absolute;
    top: 68px;
    left: 64px;
    width: 1882px;
    height: 1254px;
    border: 2px solid #3b7549;
    border-left-width: 4px;
    background:
        repeating-linear-gradient(90deg, #3b7549 0 10px, #fff 10px 14px, #3b7549 14px 18px) top / 100% 4px no-repeat,
        repeating-linear-gradient(90deg, #fff 0 4px, #3b7549 4px 18px) bottom / 100% 4px no-repeat,
        repeating-linear-gradient(#3b7549 0 2px, #fff 2px 6px, #3b7549 6px 18px) left / 2px 100% no-repeat,
        repeating-linear-gradient(#3b7549 0 12px, #fff 12px 16px, #3b7549 16px 18px) right / 4px 100% no-repeat;
    pointer-events: none;
}

.handle {
    position: absolute;
    right: -4px;
    bottom: -4px;
    width: 10px;
    height: 10px;
    border: 3px solid #3b7549;
    background: #fff;
}

/* Sheet tabs */
.sheets {
    flex: none;
    height: 52px;
    display: flex;
    align-items: center;
    padding-left: 30px;
    border-top: 2px solid #6a6a6a;
    background: #323232;
}

.sheets button + button {
    margin-left: 32px;
}

.sheets .sheet-tab {
    align-self: flex-start;
    width: 158px;
    height: 46px;
    margin-top: -2px;
    border-bottom: 2px solid #6a6a6a;
    border-radius: 0 0 6px 6px;
    background: #fff;
    color: #3f8253;
    font-size: 23px;
    font-weight: 700;
}

.sheets .add {
    align-self: flex-start;
    width: 76px;
    height: 42px;
    margin-left: 0;
    padding-top: 6px;
    border-right: 2px solid #6a6a6a;
}

/* Status bar */
.status {
    flex: none;
    height: 46px;
    display: flex;
    align-items: center;
    gap: 40px;
    padding-left: 28px;
    border-top: 2px solid #000;
    background: linear-gradient(#484848, #3b3b3b);
    color: #f0f0f0;
}

.hint {
    margin-right: auto;
}

.views {
    display: flex;
    margin-left: -18px;
}

.views button {
    width: 72px;
    height: 44px;
}

.views .on {
    background: #5c5c5c;
}

.zoom {
    display: flex;
    align-items: center;
    gap: 16px;
    margin-left: -26px;
}

.zoom input {
    appearance: none;
    width: 196px;
    height: 8px;
    margin: 0;
    border-radius: 4px;
    background: #7b7b7b;
}

.zoom input::-webkit-slider-thumb {
    appearance: none;
    width: 22px;
    height: 22px;
    border-radius: 50%;
    background: #cfcfcf;
}

.percent {
    width: 106px;
}
```
